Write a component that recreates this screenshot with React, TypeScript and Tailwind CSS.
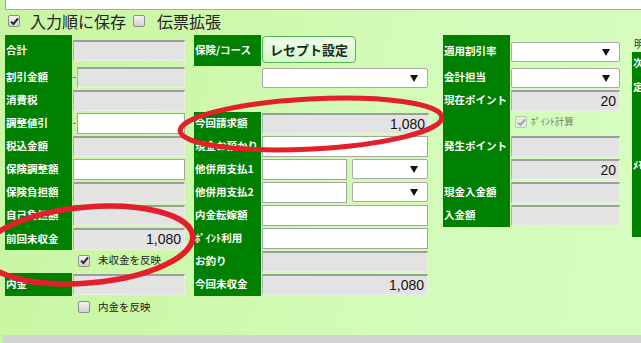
import React from "react";

const JP = "font-['Noto_Sans_CJK_JP',sans-serif]";

const Gray = ({ className = "", value }: { className?: string; value?: string }) => (
  <div
    className={`box-border h-[21px] bg-[#e3e3e3] border-t-2 border-l border-r border-b border-t-[#9d9d9d] border-l-[#adadad] border-r-[#ececec] border-b-[#ececec] flex items-center justify-end pr-[3px] text-[14px] text-[#111] font-['Liberation_Sans',sans-serif] ${className}`}
  >
    {value}
  </div>
);

const White = ({ className = "" }: { className?: string }) => (
  <div className={`box-border h-[21px] bg-white border border-[#a5a5a5] ${className}`} />
);

const Select = ({ className = "" }: { className?: string }) => (
  <div
    className={`box-border h-[20px] bg-white border border-[#a9a9a9] rounded-[2px] flex items-center justify-end pr-[9px] ${className}`}
  >
    <svg width="8" height="7" viewBox="0 0 8 7">
      <path d="M0 0H8L4 7Z" fill="#111" />
    </svg>
  </div>
);

const Check = ({ checked = false, disabled = false }: { checked?: boolean; disabled?: boolean }) => (
  <div
    className={`box-border w-[12px] h-[12px] rounded-[2px] border flex items-center justify-center shrink-0 ${
      disabled ? "border-[#b8c8b0] bg-[#e6ecdf]" : "border-[#8e8e8e] bg-[linear-gradient(#f4f4f4,#d2d2d2)]"
    }`}
  >
    {checked && (
      <svg width="9" height="9" viewBox="0 0 9 9">
        <path d="M1 4.6L3.4 7L8 1.5" fill="none" stroke={disabled ? "#9aa" : "#2a2a2a"} strokeWidth="2" />
      </svg>
    )}
  </div>
);

const Row = ({
  label,
  h,
  pt,
  lh = "h-[21px]",
  green = true,
  children,
}: {
  label?: string;
  h: string;
  pt: string;
  lh?: string;
  green?: boolean;
  children?: React.ReactNode;
}) => (
  <div className={`flex ${h}`}>
    <div className={`w-[67px] shrink-0 flex items-start ${pt} ${green ? "bg-[#008000]" : ""}`}>
      <div className={`${lh} flex items-center pl-[1px] text-white text-[10.5px] font-bold leading-none whitespace-nowrap`}>
        {label}
      </div>
    </div>
    <div className={`ml-[1px] flex items-start gap-[5px] ${pt}`}>{children}</div>
  </div>
);

const Dash = ({ children }: { children: React.ReactNode }) => (
  <div className="flex items-center">
    <div className="w-[3px] h-px bg-[#777] mr-[1px]" />
    {children}
  </div>
);

export default function App() {
  return (
    <div
      className={`relative w-[641px] h-[343px] overflow-hidden flex flex-col bg-[linear-gradient(100deg,#c9f5a2_0%,#cdf8a9_30%,#d3fbb7_55%,#d6fdbe_100%)] ${JP}`}
    >
      {/* top textarea remnant */}
      <div className="ml-[5px] h-[10px] shrink-0 bg-white border-b border-l border-[#a8a8a8]" />

      {/* checkbox row */}
      <div className="h-[25px] shrink-0 flex items-center pl-[8px] pb-[3px] text-[16px] text-[#222] leading-none">
        <Check checked />
        <span className="ml-[10px]">入力順に保存</span>
        <div className="ml-[7px]">
          <Check />
        </div>
        <span className="ml-[12px]">伝票拡張</span>
      </div>

      {/* columns */}
      <div className="flex items-start pl-[5px] shrink-0">
        {/* left column */}
        <div className="w-[180px] shrink-0 flex flex-col">
          <Row label="合計" h="h-[30px]" pt="pt-[5px]">
            <Gray className="w-[112px]" />
          </Row>
          <Row label="割引金額" h="h-[23px]" pt="pt-[2px]">
            <Dash>
              <Gray className="w-[108px]" />
            </Dash>
          </Row>
          <Row label="消費税" h="h-[23px]" pt="pt-[2px]">
            <Gray className="w-[112px]" />
          </Row>
          <Row label="調整値引" h="h-[23px]" pt="pt-[2px]">
            <Dash>
              <White className="w-[108px]" />
            </Dash>
          </Row>
          <Row label="税込金額" h="h-[23px]" pt="pt-[2px]">
            <Gray className="w-[112px]" />
          </Row>
          <Row label="保険調整額" h="h-[23px]" pt="pt-[2px]">
            <White className="w-[112px]" />
          </Row>
          <Row label="保険負担額" h="h-[23px]" pt="pt-[2px]">
            <Gray className="w-[112px]" />
          </Row>
          <Row label="自己負担額" h="h-[23px]" pt="pt-[2px]">
            <Gray className="w-[112px]" />
          </Row>
          <Row label="前回未収金" h="h-[24px]" pt="pt-[2px]" lh="h-[22px]">
            <Gray className="w-[112px] h-[22px]" value="1,080" />
          </Row>
          <div className="h-[23px] flex items-center pl-[73px] pb-[2px] text-[10.5px] text-[#222] leading-none">
            <Check checked />
            <span className="ml-[8px]">未収金を反映</span>
          </div>
          <Row label="内金" h="h-[23px]" pt="pt-[1px]">
            <Gray className="w-[112px]" />
          </Row>
          <div className="mt-[4px] h-[14px] flex items-center pl-[73px] text-[10.5px] text-[#222] leading-none">
            <Check />
            <span className="ml-[8px]">内金を反映</span>
          </div>
        </div>

        {/* middle column */}
        <div className="ml-[9px] w-[236px] shrink-0 flex flex-col">
          <Row label="保険/コース" h="h-[31px]" pt="pt-[1px]" lh="h-[29px]">
            <button className="box-border w-[94px] h-[27px] rounded-[4px] border border-[#56b456] bg-[linear-gradient(#eefee8,#d6f7cc)] text-[13px] font-bold text-[#1b2a1b] leading-none">
              レセプト設定
            </button>
          </Row>
          <Row h="h-[46px]" pt="pt-[2px]" green={false}>
            <Select className="w-[166px]" />
          </Row>
          <Row label="今回請求額" h="h-[23px]" pt="pt-[1px]">
            <Gray className="w-[167px]" value="1,080" />
          </Row>
          <Row label="現金お預かり" h="h-[23px]" pt="pt-[1px]">
            <White className="w-[166px]" />
          </Row>
          <Row label="他併用支払1" h="h-[23px]" pt="pt-[1px]">
            <White className="w-[85px]" />
            <Select className="w-[76px]" />
          </Row>
          <Row label="他併用支払2" h="h-[23px]" pt="pt-[1px]">
            <White className="w-[85px]" />
            <Select className="w-[76px]" />
          </Row>
          <Row label="内金転嫁額" h="h-[23px]" pt="pt-[1px]">
            <White className="w-[166px]" />
          </Row>
          <Row label="ﾎﾟｲﾝﾄ利用" h="h-[23px]" pt="pt-[1px]">
            <White className="w-[166px]" />
          </Row>
          <Row label="お釣り" h="h-[23px]" pt="pt-[1px]">
            <Gray className="w-[166px]" />
          </Row>
          <Row label="今回未収金" h="h-[23px]" pt="pt-[1px]">
            <Gray className="w-[166px]" value="1,080" />
          </Row>
        </div>

        {/* right column */}
        <div className="ml-[13px] w-[177px] shrink-0 flex flex-col">
          <Row label="適用割引率" h="h-[29px]" pt="pt-[7px]" lh="h-[19px]">
            <Select className="w-[109px] h-[19px]" />
          </Row>
          <Row label="会計担当" h="h-[24px]" pt="pt-[4px]" lh="h-[19px]">
            <Select className="w-[109px] h-[19px]" />
          </Row>
          <Row label="現在ポイント" h="h-[23px]" pt="pt-[2px]" lh="h-[20px]">
            <Gray className="w-[109px] h-[20px]" value="20" />
          </Row>
          <Row h="h-[23px]" pt="pt-[5px]" lh="h-[12px]">
            <div className="flex items-center ml-[4px] text-[9.5px] text-[#6d7d6a] leading-none">
              <Check checked disabled />
              <span className="ml-[4px]">ﾎﾟｲﾝﾄ計算</span>
            </div>
          </Row>
          <Row label="発生ポイント" h="h-[23px]" pt="pt-[2px]">
            <Gray className="w-[109px]" />
          </Row>
          <Row h="h-[23px]" pt="pt-[2px]">
            <Gray className="w-[109px]" value="20" />
          </Row>
          <Row label="現金入金額" h="h-[23px]" pt="pt-[2px]">
            <Gray className="w-[109px]" />
          </Row>
          <Row label=" 入金額" h="h-[24px]" pt="pt-[2px]">
            <Gray className="w-[109px]" />
          </Row>
        </div>

        {/* far right (clipped) column */}
        <div className="ml-[12px] w-[60px] shrink-0 flex flex-col text-[10.5px] leading-none">
          <div className="h-[17px] pt-[4px] pl-[2px] text-[#333]">明細</div>
          <div className="h-[185px] bg-[#008000] text-white font-bold pl-[1px]">
            <div className="pt-[6px]">次回</div>
            <div className="pt-[13px]">定期</div>
            <div className="pt-[68px]">ﾒﾓ</div>
          </div>
        </div>
      </div>

      {/* bottom strip */}
      <div className="mt-auto ml-[3px] h-[8px] shrink-0 bg-[#d3d3d3]" />

      {/* red annotation ellipses */}
      <svg className="absolute inset-0 pointer-events-none" width="641" height="343" viewBox="0 0 641 343">
        <ellipse cx="311" cy="124" rx="131" ry="25" transform="rotate(-3 311 124)" fill="none" stroke="#e41e2b" strokeWidth="5" />
        <ellipse cx="88" cy="245" rx="105" ry="38" transform="rotate(-5 88 245)" fill="none" stroke="#e41e2b" strokeWidth="5.5" />
      </svg>
    </div>
  );
}
